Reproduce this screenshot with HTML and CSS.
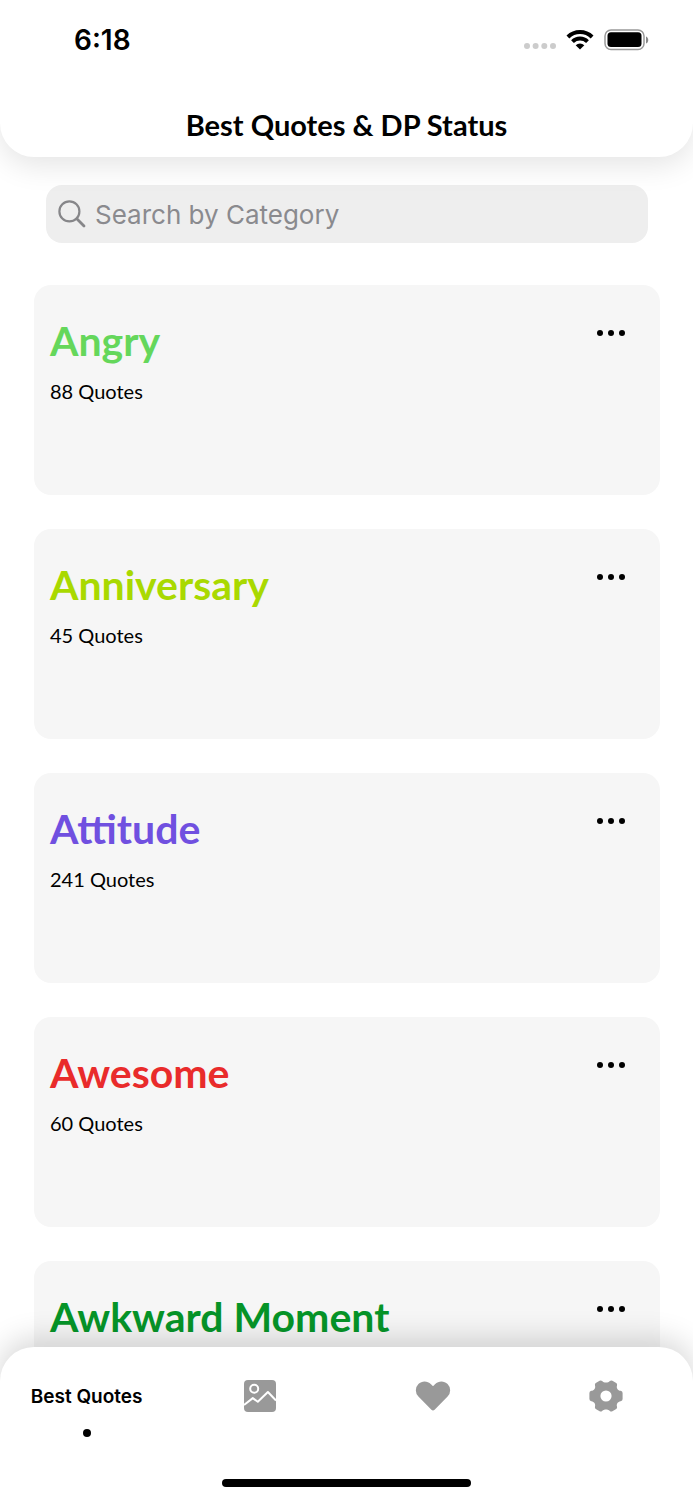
FILE: index.html
```
<!DOCTYPE html>
<html lang="en">

	<head>
		<meta charset="utf-8">
		<meta name="viewport" content="width=device-width, initial-scale=1">
		<title>Best Quotes &amp; DP Status</title>
		<link rel="stylesheet" href="styles.css">
	</head>

	<body>
		<header class="header">
			<div class="status">
				<span class="time">6:18</span>
				<div class="status-icons">
					<svg width="32" height="10" viewBox="0 0 32 10" fill="#ccc">
						<circle cx="3" cy="5" r="3" />
						<circle cx="11.6" cy="5" r="3" />
						<circle cx="20.3" cy="5" r="3" />
						<circle cx="29" cy="5" r="3" />
					</svg>
					<svg width="28" height="22" viewBox="0 0 28 22">
						<g fill="none" stroke="#000" stroke-width="4">
							<path d="M1.9 8a17.2 17.2 0 0 1 24.2 0" />
							<path d="M6.5 12.600a10.8 10.8 0 0 1 15 0" />
						</g>
						<path d="M14 20.600l-4.3-4.300a6.300 6.300 0 0 1 8.600 0z" />
					</svg>
					<svg width="45" height="22" viewBox="0 0 45 22">
						<rect x="1" y="1" width="39" height="19.500" rx="6" fill="#fff" stroke="#999" stroke-width="1.500" />
						<rect x="3.500" y="3.300" width="34" height="14.800" rx="3.500" />
						<path d="M42 7.500c3 1 3 6 0 7z" fill="#888" />
					</svg>
				</div>
			</div>
			<h1 class="title">Best Quotes &amp; DP Status</h1>
		</header>

		<main class="content">
			<label class="search">
				<svg width="28" height="28" viewBox="0 0 28 28" fill="none" stroke="#868689" stroke-linecap="round">
					<circle cx="11.400" cy="11.400" r="10" stroke-width="2.200" />
					<path d="M18.800 18.800l7.200 7.200" stroke-width="2.800" />
				</svg>
				<input type="search" placeholder="Search by Category" aria-label="Search by Category">
			</label>

			<section class="card">
				<div>
					<h2 class="name angry">Angry</h2>
					<p class="count">88 Quotes</p>
				</div>
				<button class="more" type="button" aria-label="More"><i></i><i></i><i></i></button>
			</section>
			<section class="card">
				<div>
					<h2 class="name anniversary">Anniversary</h2>
					<p class="count">45 Quotes</p>
				</div>
				<button class="more" type="button" aria-label="More"><i></i><i></i><i></i></button>
			</section>
			<section class="card">
				<div>
					<h2 class="name attitude">Attitude</h2>
					<p class="count">241 Quotes</p>
				</div>
				<button class="more" type="button" aria-label="More"><i></i><i></i><i></i></button>
			</section>
			<section class="card">
				<div>
					<h2 class="name awesome">Awesome</h2>
					<p class="count">60 Quotes</p>
				</div>
				<button class="more" type="button" aria-label="More"><i></i><i></i><i></i></button>
			</section>
			<section class="card">
				<div>
					<h2 class="name awkward">Awkward Moment</h2>
				</div>
				<button class="more" type="button" aria-label="More"><i></i><i></i><i></i></button>
			</section>
		</main>

		<nav class="tabbar">
			<div class="tabs">
				<a class="tab selected" href="#quotes">Best Quotes</a>
				<a class="tab" href="#images" aria-label="Images">
					<svg width="32" height="32" viewBox="0 0 32 32">
						<rect width="32" height="32" rx="4" fill="#999" />
						<g fill="none" stroke="#fff" stroke-width="2">
							<circle cx="10.2" cy="8.8" r="4" />
							<path d="M0 25l8.800-6.900 5 3.700L23.900 12 32 20.500" stroke-linejoin="round" />
						</g>
					</svg>
				</a>
				<a class="tab" href="#favorites" aria-label="Favorites">
					<svg width="36" height="32" viewBox="0 0 36 32">
						<path d="M18 6.200l-2-2C12.400 .5 6.900 .5 3.400 4a9 9 0 0 0 0 12.600L16.400 29.800q1.600 1.400 3.200 0L32.600 16.600a9 9 0 0 0 0-12.600C29.100 .5 23.600 .5 20 4.200z" fill="#999" />
					</svg>
				</a>
				<a class="tab" href="#settings" aria-label="Settings">
					<svg width="34" height="32" viewBox="0 0 34 32">
						<path fill="#999" fill-rule="evenodd" d="M10.600 .7Q12 0 13.200 1C14.800 3 19.200 3 20.800 1Q22 0 23.400 .7L27.200 2.900Q28.500 3.800 28 5.400C27.200 8 28.800 10.400 31.600 10.800Q33.600 11.200 33.600 13V19Q33.600 20.800 31.600 21.200C28.800 21.600 27.200 24 28 26.600Q28.500 28.200 27.200 29.100L23.400 31.300Q22 32 20.800 31C19.200 29 14.800 29 13.200 31Q12 32 10.600 31.300L6.800 29.100Q5.500 28.200 6 26.600C6.800 24 5.200 21.600 2.400 21.200Q.4 20.800 .4 19V13Q.4 11.200 2.400 10.800C5.200 10.400 6.800 8 6 5.400Q5.500 3.800 6.800 2.900zM17 10.400a5.600 5.600 0 1 0 0 11.200 5.600 5.600 0 0 0 0-11.200z" />
					</svg>
				</a>
			</div>
			<div class="home"></div>
		</nav>
	</body>

</html>
```
FILE: styles.css
```
* {
	box-sizing: border-box;
}
body {
	display: flex;
	flex-direction: column;
	height: 100vh;
	margin: 0px;
	overflow: hidden;
	background-color: #fff;
	color: #000;
	font-family: Inter, "Liberation Sans", sans-serif;
}
svg {
	display: block;
	flex: none;
}
.header {
	position: relative;
	z-index: 1;
	padding: 24px 44px 14px 74px;
	border-radius: 0px 0px 34px 34px;
	background-color: #fff;
	box-shadow: 0px 8px 30px rgba(0, 0, 0, 0.11);
}
.status {
	display: flex;
	align-items: center;
	justify-content: space-between;
	height: 32px;
}
.time {
	font-size: 28px;
	font-weight: 600;
}
.status-icons {
	display: flex;
	align-items: center;
	gap: 10px;
}
.status-icons svg:first-child {
	align-self: flex-end;
}
.title {
	margin: 51px -44px 0px -74px;
	text-align: center;
	font-family: Lato, sans-serif;
	font-size: 29px;
	line-height: 36px;
	font-weight: 700;
}
/* the list scrolls behind the rounded corners of the tab bar */
.content {
	flex: 1;
	min-height: 0px;
	margin-bottom: -36px;
	padding: 28px 33px 36px 34px;
	overflow-y: auto;
	scrollbar-width: none;
}
.search {
	display: flex;
	align-items: center;
	gap: 9px;
	height: 58px;
	margin: 0px 12px 42px 12px;
	padding: 0px 12px;
	border-radius: 16px;
	background-color: #eee;
}
.search input {
	flex: 1;
	min-width: 0px;
	padding: 0px;
	border: none;
	outline: none;
	background: none;
	font-family: inherit;
	font-size: 26px;
}
.search input::placeholder {
	color: #8a8a8e;
}
.card {
	display: flex;
	align-items: flex-start;
	justify-content: space-between;
	height: 210px;
	margin-bottom: 34px;
	padding: 30px 30px 30px 16px;
	border-radius: 17px;
	background-color: #f6f6f6;
}
.name {
	margin: 0px;
	font-family: Lato, sans-serif;
	font-size: 41px;
	line-height: 52px;
	font-weight: 700;
}
.angry {
	color: #65d75b;
}
.anniversary {
	color: #a9d900;
}
.attitude {
	color: #7050e0;
}
.awesome {
	color: #e92b2b;
}
.awkward {
	color: #069428;
}
.count {
	margin: 11px 0px 0px 0px;
	font-family: Lato, sans-serif;
	font-size: 20px;
	line-height: 26px;
}
.more {
	display: flex;
	gap: 5px;
	margin-top: 5px;
	padding: 10px 5px;
	border: none;
	background: none;
}
.more i {
	width: 6px;
	height: 6px;
	border-radius: 50%;
	background-color: #000;
}
.tabbar {
	position: relative;
	z-index: 1;
	padding: 33px 0px 13px 0px;
	border-radius: 34px 34px 0px 0px;
	background-color: #fff;
	box-shadow: 0px -8px 30px rgba(0, 0, 0, 0.16);
}
.tabs {
	display: grid;
	grid-template-columns: repeat(4, 1fr);
	height: 99px;
}
.tab {
	display: flex;
	flex-direction: column;
	align-items: center;
	color: #000;
	font-size: 19px;
	line-height: 34px;
	font-weight: 600;
	text-decoration: none;
}
.selected::after {
	content: "";
	width: 8px;
	height: 8px;
	margin-top: 15px;
	border-radius: 50%;
	background-color: #000;
}
.home {
	width: 36%;
	height: 8px;
	margin: 0px auto;
	border-radius: 4px;
	background-color: #000;
}
```
